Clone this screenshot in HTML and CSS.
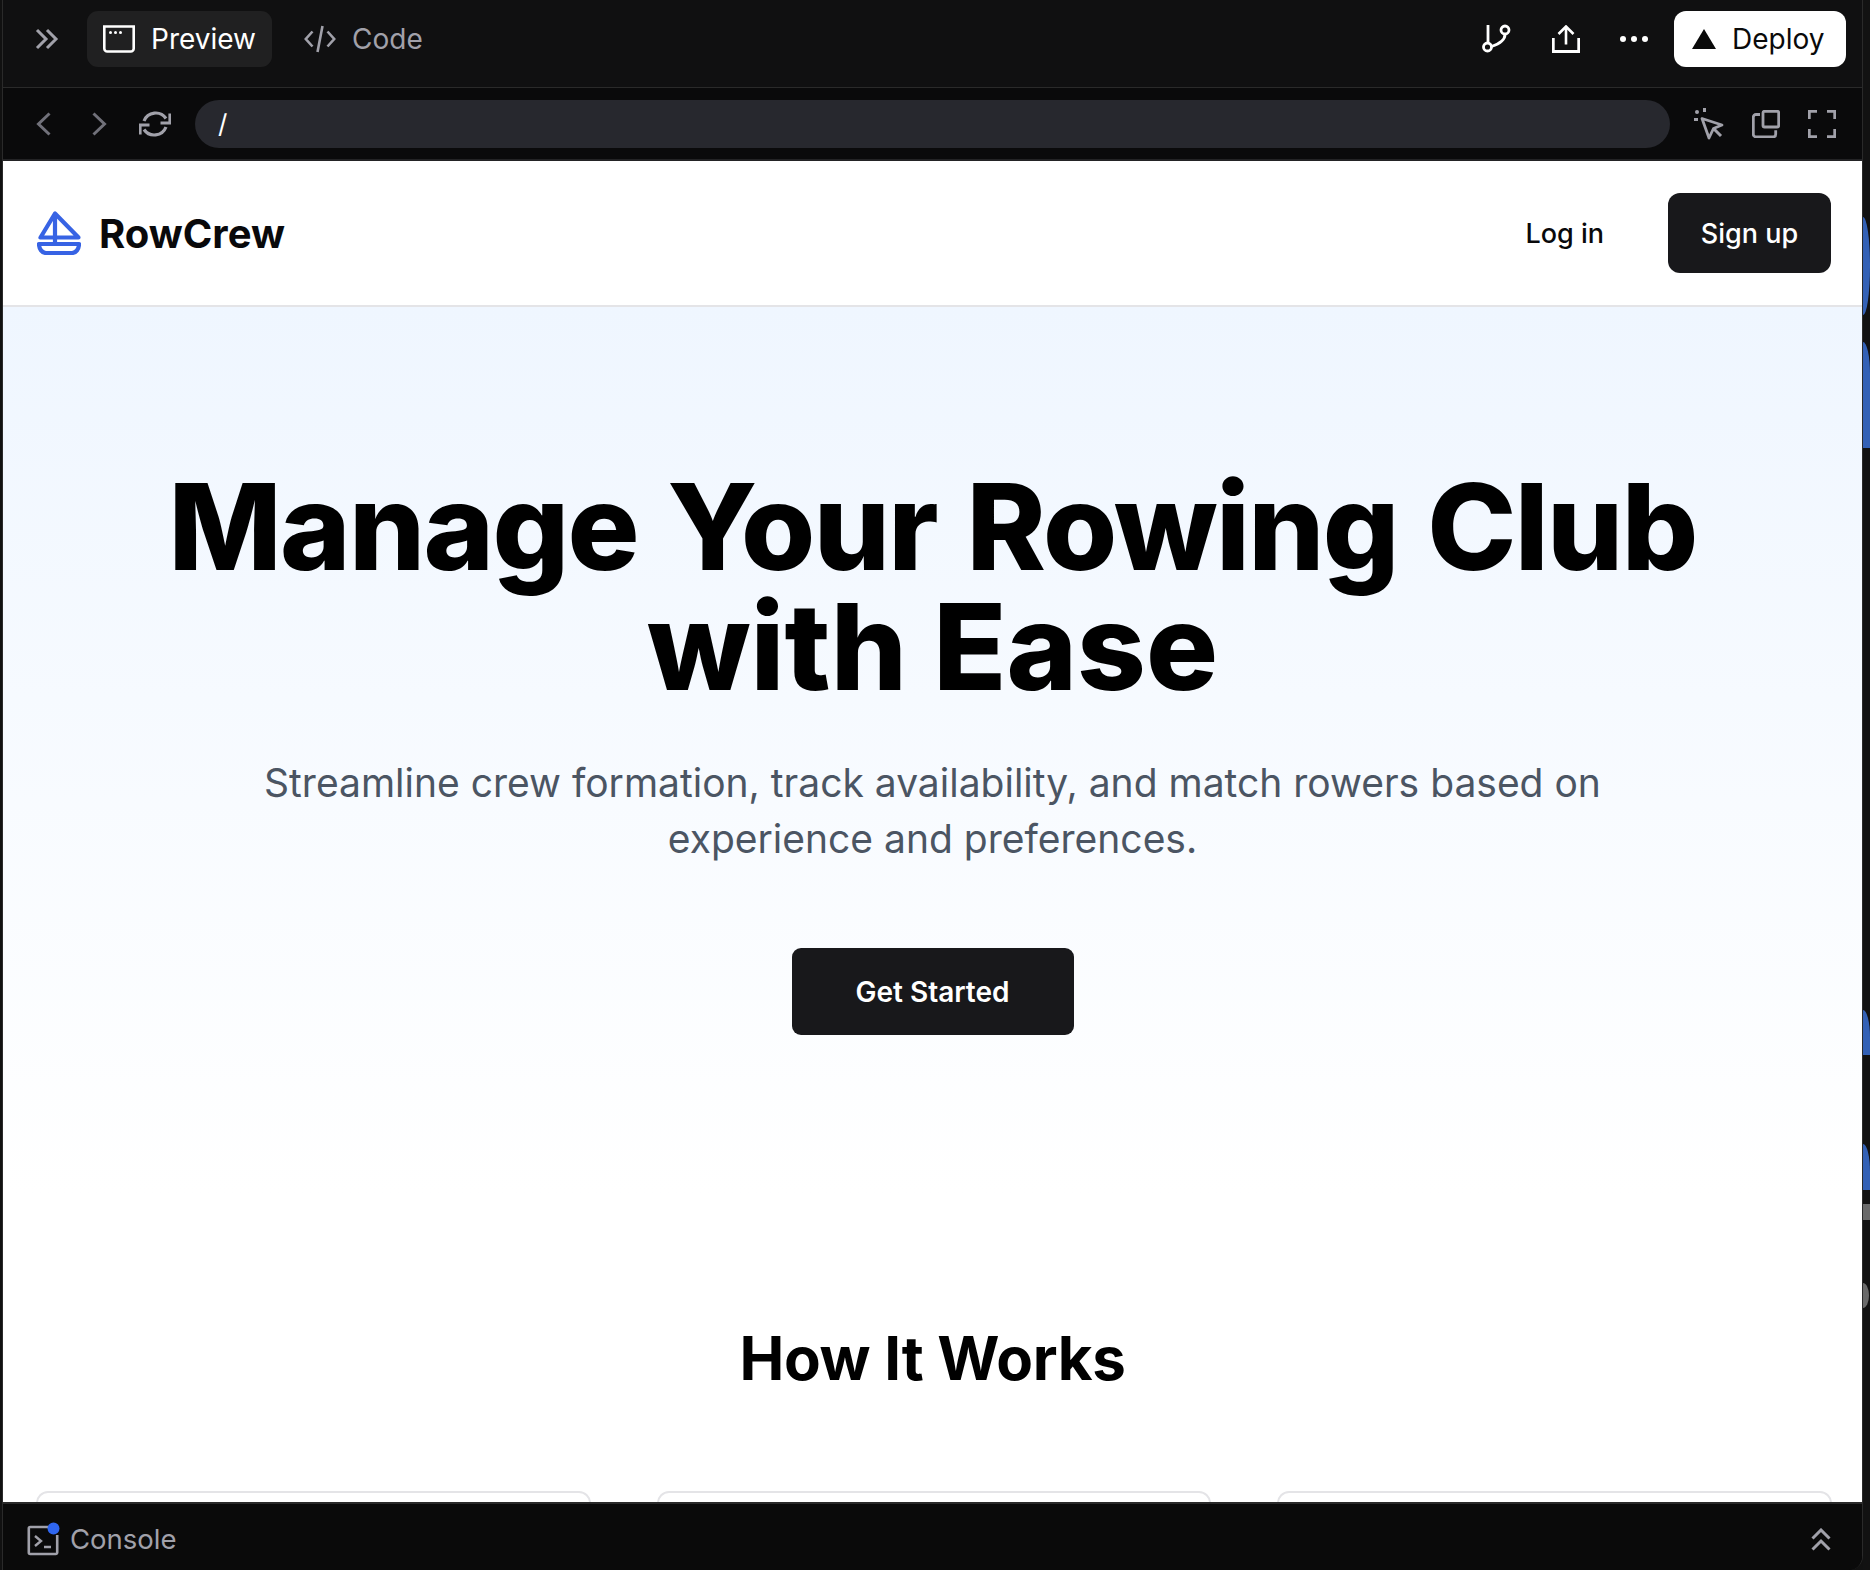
FILE: index.html
```html
<!DOCTYPE html>
<html lang="en">
<head>
<meta charset="utf-8">
<title>RowCrew</title>
<link rel="stylesheet" href="styles.css">
</head>
<body>
<div class="frame">
  <header class="topbar">
    <svg class="ic ic-collapse" viewBox="0 0 24 22" fill="none" stroke="#a1a1aa" stroke-width="3"><path d="M2 2l9 9-9 9M12 2l9 9-9 9"/></svg>
    <div class="tab tab-active">
      <svg class="ic ic-tab" viewBox="0 0 32 28" fill="none" stroke="#fff" stroke-width="2.600"><path d="M1.300 1.500h29.400v22a3 3 0 0 1-3 3H4.300a3 3 0 0 1-3-3z"/><g fill="#fff" stroke="none"><circle cx="7.500" cy="7.500" r="1.500"/><circle cx="12.500" cy="7.500" r="1.500"/><circle cx="17.500" cy="7.500" r="1.500"/></g></svg>
      <span>Preview</span>
    </div>
    <div class="tab tab-code">
      <svg class="ic ic-tab" viewBox="0 0 32 28" fill="none" stroke="#a1a1aa" stroke-width="2.600"><path d="M8.500 6.500L1.800 14l6.700 7.500M23.500 6.500l6.700 7.500-6.700 7.500M18.500 1l-5 26"/></svg>
      <span>Code</span>
    </div>
    <div class="top-actions">
      <svg class="ic ic-branch" viewBox="0 0 30 30" fill="none" stroke="#fff" stroke-width="2.800"><path d="M6 1v17"/><circle cx="5.500" cy="23" r="4"/><circle cx="23" cy="6" r="4"/><path d="M23 10.500c0 6-6 9.500-13.500 12"/></svg>
      <svg class="ic ic-share" viewBox="0 0 28 28" fill="none" stroke="#fff" stroke-width="2.600"><path d="M1.300 13v13.500h25.400V13" stroke-width="2.800"/><path d="M14 1.500v18M6.500 9L14 1.500 21.500 9"/></svg>
      <svg class="ic ic-dots" viewBox="0 0 28 6" fill="#fff"><circle cx="3" cy="3" r="3"/><circle cx="14" cy="3" r="3"/><circle cx="25" cy="3" r="3"/></svg>
      <div class="deploy">
        <svg class="ic ic-tri" viewBox="0 0 24 20" fill="#0a0a0a"><path d="M12 0l12 20H0z"/></svg>
        <span>Deploy</span>
      </div>
    </div>
  </header>

  <div class="addressbar">
    <svg class="ic ic-nav" viewBox="0 0 16 24" fill="none" stroke="#71717a" stroke-width="3"><path d="M13.500 1.500L2.500 12l11 10.500"/></svg>
    <svg class="ic ic-nav ic-fwd" viewBox="0 0 16 24" fill="none" stroke="#71717a" stroke-width="3"><path d="M2.500 1.500l11 10.500-11 10.500"/></svg>
    <svg class="ic ic-refresh" viewBox="0 0 32 28" fill="none" stroke="#a1a1aa" stroke-width="3.200"><path d="M5 11A12.500 12.500 0 0 1 27 8.500M31 3.500V13H21.500M1 24.500V15H10.500M27 17A12.500 12.500 0 0 1 5 19.500"/></svg>
    <div class="url">/</div>
    <svg class="ic ic-pick" viewBox="0 0 36 36" fill="none"><path d="M8 12.500l20 6.500-8.500 3.500-4.500 9.500z" stroke="#a1a1aa" stroke-width="2.800" stroke-linejoin="round"/><path d="M19.500 22.500L27 30" stroke="#a1a1aa" stroke-width="3"/><g fill="#a1a1aa"><rect x="0" y="12" width="4" height="3"/><rect x="9" y="2" width="3" height="4"/><rect x="1" y="4" width="4" height="4" rx="2"/></g></svg>
    <svg class="ic ic-window" viewBox="0 0 28 28" fill="none" stroke="#a1a1aa" stroke-width="2.800"><path d="M8 4.500H4a2.700 2.700 0 0 0-2.700 2.700v17a2.700 2.700 0 0 0 2.700 2.700h17a2.700 2.700 0 0 0 2.700-2.700v-4"/><rect x="11" y="1.300" width="15.700" height="15.700" rx="1.500"/></svg>
    <svg class="ic ic-full" viewBox="0 0 28 28" fill="none" stroke="#a1a1aa" stroke-width="2.800"><path d="M1.300 9V1.300H9M19 1.300h7.700V9M26.700 19v7.700H19M9 26.700H1.300V19"/></svg>
  </div>

  <div class="viewport">
    <nav class="site-nav">
      <div class="brand">
        <svg class="boat" viewBox="0 0 44 44" fill="none" stroke="#3763e4" stroke-width="4.200" stroke-linejoin="round" stroke-linecap="round"><path d="M18 2.500L3.500 26.500H41.500zM18 2.500V33"/><path d="M2 33h40c0 5-3 9-7 9H9c-4 0-7-4-7-9z"/></svg>
        <span>RowCrew</span>
      </div>
      <div class="nav-actions">
        <a class="login">Log in</a>
        <a class="signup">Sign up</a>
      </div>
    </nav>

    <section class="hero">
      <h1><span class="h1-top">Manage Your Rowing Club</span><br>with Ease</h1>
      <p>Streamline crew formation, track availability, and match rowers based on experience and preferences.</p>
      <a class="cta">Get Started</a>
    </section>

    <section class="how">
      <h2>How It Works</h2>
      <div class="cards">
        <div class="card"></div>
        <div class="card"></div>
        <div class="card"></div>
      </div>
    </section>
  </div>

  <footer class="console">
    <svg class="ic ic-console" viewBox="0 0 38 34" fill="none"><path d="M25 5H3.300a1.500 1.500 0 0 0-1.500 1.500v24a1.500 1.500 0 0 0 1.500 1.500h25.400a1.500 1.500 0 0 0 1.500-1.500V13" stroke="#a1a1aa" stroke-width="2.600"/><path d="M8 14l6 5-6 5M17 25h7" stroke="#a1a1aa" stroke-width="2.400"/><circle cx="26.500" cy="6.500" r="6" fill="#2f66f0"/></svg>
    <span>Console</span>
    <svg class="ic ic-up" viewBox="0 0 20 23" fill="none" stroke="#a1a1aa" stroke-width="3"><path d="M1.500 10.500L10 2l8.500 8.500M1.500 21.500L10 13l8.500 8.500"/></svg>
  </footer>
</div>

<div class="side-strip">
  <i class="blob blob-a"></i>
  <i class="blob blob-b"></i>
  <i class="blob blob-c"></i>
  <i class="blob blob-d"></i>
  <i class="mark mark-a"></i>
  <i class="mark mark-b"></i>
</div>
</body>
</html>
```
FILE: styles.css
```css
* { box-sizing: border-box; }
html, body { margin: 0; height: 100%; }
body {
  display: flex;
  width: 1870px;
  height: 1570px;
  overflow: hidden;
  background: #111;
  font-family: "Inter", "Liberation Sans", sans-serif;
  padding-left: 2px;
}
.ic { display: block; flex: none; }

.frame {
  width: 1861px;
  height: 1570px;
  display: flex;
  flex-direction: column;
  border-left: 1px solid #2a2a2a;
  border-right: 1px solid #2a2a2a;
  border-bottom-right-radius: 14px;
  overflow: hidden;
  background: #0a0a0a;
}

.topbar {
  height: 88px;
  flex: none;
  display: flex;
  align-items: center;
  background: #101011;
  border-bottom: 1px solid #2a2a2a;
  padding: 0 16px 9px 32px;
}
.ic-collapse { width: 24px; height: 22px; margin-right: 28px; }
.tab {
  height: 56px;
  display: flex;
  align-items: center;
  gap: 16px;
  padding: 0 16px;
  border-radius: 11px;
  font-size: 28px;
  font-weight: 400;
}
.ic-tab { width: 32px; height: 28px; }
.tab-active { width: 185px; background: #202021; color: #fff; }
.tab-code { color: #a1a1aa; margin-left: 16px; }
.top-actions { margin-left: auto; display: flex; align-items: center; }
.ic-branch { width: 30px; height: 30px; margin-right: 40px; }
.ic-share { width: 28px; height: 28px; margin-right: 40px; }
.ic-dots { width: 28px; height: 6px; margin-right: 26px; }
.deploy {
  width: 172px;
  height: 56px;
  background: #fff;
  color: #0a0a0a;
  border-radius: 12px;
  display: flex;
  align-items: center;
  gap: 16px;
  padding-left: 18px;
  font-size: 28px;
}
.ic-tri { width: 24px; height: 20px; }

.addressbar {
  height: 73px;
  flex: none;
  display: flex;
  align-items: center;
  background: #0a0a0b;
  border-bottom: 2px solid #232325;
  padding: 1px 24px 0 33px;
}
.ic-nav { width: 16px; height: 24px; }
.ic-fwd { margin-left: 39px; }
.ic-refresh { width: 32px; height: 28px; margin-left: 32px; }
.url {
  width: 1475px;
  height: 48px;
  margin-left: 24px;
  padding-left: 23px;
  border-radius: 24px;
  background: #27282e;
  color: #fff;
  font-size: 26px;
  line-height: 48px;
}
.ic-pick { width: 36px; height: 36px; margin-left: 24px; }
.ic-window { width: 28px; height: 28px; margin-left: 22px; }
.ic-full { width: 28px; height: 28px; margin-left: 28px; }

.viewport {
  flex: 1;
  min-height: 0;
  overflow: hidden;
  background: #fff;
}
.site-nav {
  height: 146px;
  display: flex;
  align-items: center;
  justify-content: space-between;
  padding: 0 31px 0 34px;
  border-bottom: 2px solid #e4e4e7;
}
.brand {
  display: flex;
  align-items: center;
  gap: 18px;
  font-size: 40px;
  font-weight: 700;
  color: #09090b;
}
.boat { width: 44px; height: 44px; }
.nav-actions { display: flex; align-items: center; gap: 64px; }
.login { font-size: 27px; font-weight: 500; color: #09090b; }
.signup {
  width: 163px;
  height: 80px;
  display: flex;
  align-items: center;
  justify-content: center;
  background: #18181b;
  color: #fff;
  border-radius: 12px;
  font-size: 27px;
  font-weight: 500;
}

.hero {
  height: 887px;
  padding-top: 160px;
  text-align: center;
  background: linear-gradient(#eff6ff, #fff);
}
.hero h1 {
  margin: 0 0 48px;
  font-size: 120px;
  line-height: 120px;
  font-weight: 800;
  color: #000;
}
.h1-top { letter-spacing: -1.7px; word-spacing: 5px; }
.hero p {
  width: 1400px;
  margin: 0 auto 81px;
  font-size: 39px;
  line-height: 56px;
  color: #4b5563;
}
.cta {
  display: inline-flex;
  align-items: center;
  justify-content: center;
  width: 282px;
  height: 87px;
  background: #18181b;
  color: #fff;
  border-radius: 9px;
  font-size: 28px;
  font-weight: 600;
}

.how { padding-top: 128px; text-align: center; }
.how h2 {
  margin: 0 0 97px;
  font-size: 60px;
  line-height: 72px;
  font-weight: 700;
  letter-spacing: -0.3px;
  color: #000;
}
.cards {
  display: grid;
  grid-template-columns: repeat(3, 1fr);
  gap: 66px;
  padding: 0 30px 0 33px;
}
.card {
  height: 300px;
  border: 2px solid #e4e4e7;
  border-radius: 12px;
  background: #fff;
}

.console {
  height: 68px;
  flex: none;
  display: flex;
  align-items: center;
  gap: 5px;
  background: #0a0a0a;
  border-top: 2px solid #2a2a2a;
  padding: 4px 31px 0 24px;
  color: #a1a1aa;
  font-size: 27.500px;
}
.ic-console { width: 38px; height: 34px; }
.ic-up { width: 20px; height: 23px; margin-left: auto; }

.side-strip {
  position: relative;
  width: 7px;
  height: 1570px;
  flex: none;
  background: #121212;
}
.blob { position: absolute; left: 0; width: 7px; background: #3361b6; }
.blob-a { top: 217px; height: 98px; border-radius: 0 100% 100% 0 / 0 50% 50% 0; }
.blob-b { top: 342px; height: 106px; border-top-right-radius: 100% 30%; }
.blob-c { top: 1010px; height: 45px; border-top-right-radius: 100% 60%; }
.blob-d { top: 1144px; height: 46px; border-top-right-radius: 100% 60%; }
.mark { position: absolute; left: 0; background: #6a6a6a; }
.mark-a { top: 1204px; width: 7px; height: 16px; }
.mark-b { top: 1283px; width: 6px; height: 25px; border-radius: 0 100% 100% 0 / 0 50% 50% 0; }
```
